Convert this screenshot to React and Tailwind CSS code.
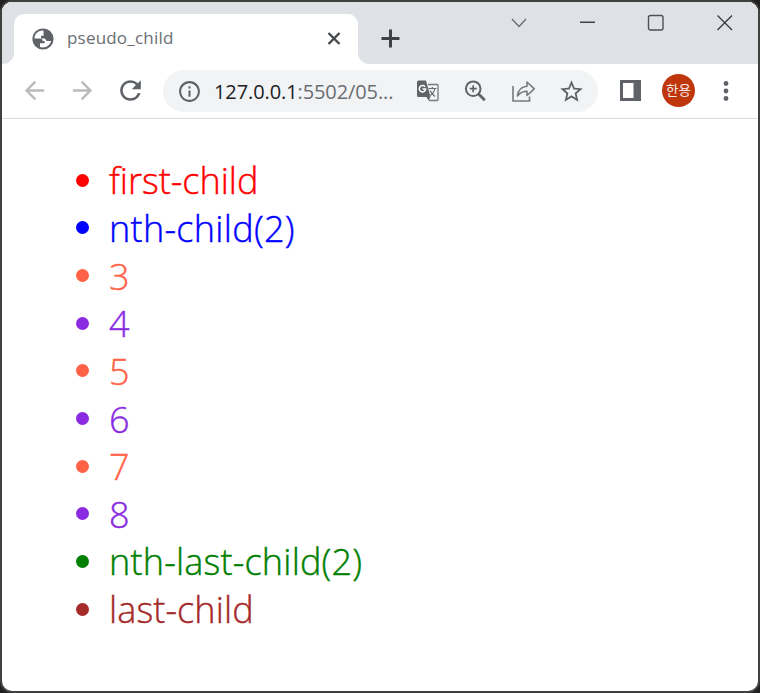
import React from "react";
import { MdArrowBack, MdArrowForward, MdRefresh, MdInfoOutline, MdStarBorder } from "react-icons/md";

const items = [
  { label: "first-child", style: "text-[#ff0000]" },
  { label: "nth-child(2)", style: "text-[#0000ff] tracking-[0.3px]" },
  { label: "3", style: "text-[#ff6347]" },
  { label: "4", style: "text-[#8a2be2]" },
  { label: "5", style: "text-[#ff6347]" },
  { label: "6", style: "text-[#8a2be2]" },
  { label: "7", style: "text-[#ff6347]" },
  { label: "8", style: "text-[#8a2be2]" },
  { label: "nth-last-child(2)", style: "text-[#008000] tracking-[0.2px]" },
  { label: "last-child", style: "text-[#a52a2a] tracking-[0.1px]" },
];

function GlobeIcon() {
  return (
    <svg className="shrink-0" width="22" height="22" viewBox="0 0 22 22">
      <circle cx="11" cy="11" r="10.600" fill="#5f6368" />
      <path d="M11.500 2.500C6 2 2.500 6 2.500 10.500h5.500c1.800 0 2.600.9 2.600 2.500h2v2.300H8v3.800c5 1.500 10-1.500 11.200-6.100h-3.700c-2 0-1.500-2.600-3.200-2.600H9V7.800h2.500z" fill="#fff" />
    </svg>
  );
}

function TabStrip() {
  return (
    <header className="flex h-[62px] shrink-0 bg-[#dee1e6]">
      <div className="flex w-3 shrink-0 items-end bg-white">
        <div className="h-full w-full rounded-br-[11px] bg-[#dee1e6]" />
      </div>
      <div className="w-[344px] shrink-0 bg-[#dee1e6] pt-3">
        <div className="flex h-[50px] items-center rounded-t-[10px] bg-white pl-[18px] pr-[10px]">
          <GlobeIcon />
          <span className="-mt-[2px] ml-[13px] flex-1 text-[17px] leading-[48px] tracking-[0.2px] text-[#6a6e73]">pseudo_child</span>
          <svg width="28" height="28" viewBox="0 0 28 28" fill="none" stroke="#45494d" strokeWidth="2.4">
            <path d="M8.5 8l11 11M19.5 8l-11 11" />
          </svg>
        </div>
      </div>
      <div className="flex flex-1 bg-white">
        <div className="flex flex-1 justify-between rounded-bl-[11px] bg-[#dee1e6] pl-[22px] pr-[24px]">
          <svg className="mt-[26px]" width="20" height="20" viewBox="0 0 20 20" fill="none" stroke="#3f4347" strokeWidth="3">
            <path d="M1.500 10.500h18M10.500 1.500v18" />
          </svg>
          <div className="flex">
            <svg className="mt-[10px] mr-[50px]" width="18" height="20" viewBox="0 0 18 20" fill="none" stroke="#66696d" strokeWidth="1.300">
              <path d="M2 7l7 7.500L16 7" />
            </svg>
            <svg className="mt-[10px] mr-[51px]" width="18" height="20" viewBox="0 0 18 20" fill="none" stroke="#414345" strokeWidth="1.400">
              <path d="M2 10.300h15" />
            </svg>
            <svg className="mt-[10px] mr-[51px]" width="18" height="20" viewBox="0 0 18 20" fill="none" stroke="#4e5053" strokeWidth="1.400">
              <rect x="1.500" y="3.500" width="14.500" height="14.500" rx="2" />
            </svg>
            <svg className="mt-[10px]" width="18" height="20" viewBox="0 0 18 20" fill="none" stroke="#36383a" strokeWidth="1.300">
              <path d="M1.500 3.500l14.500 14.500M16 3.500L1.500 18" />
            </svg>
          </div>
        </div>
      </div>
    </header>
  );
}

function TranslateIcon() {
  return (
    <svg className="shrink-0" width="24" height="24" viewBox="0 0 24 24">
      <path d="M12 5.500h9a1 1 0 0 1 1 1v14a1 1 0 0 1-1 1h-8" fill="none" stroke="#777a7d" strokeWidth="1.300" />
      <path d="M2.500 1.500h7.500l4.500 16.500H2.500a1.500 1.500 0 0 1-1.500-1.500V3a1.500 1.500 0 0 1 1.500-1.500z" fill="#606367" />
      <path d="M10.500 18h4l-2 3.500z" fill="#606367" />
      <path d="M9 7.800A3.200 3.200 0 1 0 9.700 10H6.500" fill="none" stroke="#fff" strokeWidth="1.500" />
      <path d="M12.500 9.500h8M16.300 8v1.500M19 9.500c-.6 3-2.500 5.500-4.500 7M14 11.500c1.200 2.500 3 4.500 5 6" fill="none" stroke="#686b6e" strokeWidth="1.200" />
    </svg>
  );
}

function Toolbar() {
  return (
    <div className="flex h-[55px] shrink-0 items-center border-b border-[#dadce0] bg-white pl-[18px] text-[#5f6368]">
      <MdArrowBack size={29} color="#b9bbbd" className="-mt-[2px] shrink-0" />
      <MdArrowForward size={29} color="#b9bbbd" className="-mt-[2px] ml-[19px] shrink-0" />
      <MdRefresh size={31} className="-mt-[2px] ml-[18px] shrink-0" />
      <div className="ml-[17px] flex h-[42px] w-[435px] shrink-0 items-center rounded-full bg-[#f1f3f4] pl-[14px]">
        <MdInfoOutline size={25} className="shrink-0" />
        <span className="ml-[12px] mt-px w-[202px] text-[20px] leading-[42px] tracking-[-0.1px] text-[#6a6d71]">
          <span className="text-[#202124]">127.0.0.1</span>:5502/05...
        </span>
        <TranslateIcon />
        <svg className="ml-[24px] mr-[2px] shrink-0" width="24" height="24" viewBox="0 0 24 24" fill="none" stroke="#606367">
          <circle cx="9.200" cy="9.700" r="7.300" strokeWidth="2" />
          <path d="M14.300 14.800l6.500 6.500" strokeWidth="2.800" />
          <path d="M5.700 9.700h7M9.200 6.200v7" strokeWidth="1.700" />
        </svg>
        <svg className="ml-[21px] shrink-0" width="26" height="26" viewBox="0 0 26 26" fill="none" stroke="#777a7d" strokeWidth="1.600">
          <path d="M2 8v15h16.500v-4.500" />
          <path d="M6.500 18c.6-6 4-9.300 9.500-9.700V4l7.300 6.800L16 17.500v-4.200c-4.200 0-7 1.500-9.500 4.700z" strokeLinejoin="round" />
        </svg>
        <MdStarBorder size={27} className="ml-[21px] shrink-0" />
      </div>
      <svg className="-mt-px ml-[22px] shrink-0" width="21" height="21" viewBox="0 0 21 21">
        <path d="M0 0h21v21H0zM3 3v15h10.500V3z" fill="#5f6368" fillRule="evenodd" />
      </svg>
      <div className="-mt-[2px] ml-[21px] flex h-[33px] w-[33px] shrink-0 items-center justify-center rounded-full bg-[#bf360c] text-[13.5px] leading-none text-[#f6e8e3] [font-family:'Noto_Sans_CJK_KR',sans-serif]">
        한용
      </div>
      <svg className="-mt-px ml-[28px] shrink-0" width="6" height="22" viewBox="0 0 6 22" fill="#5f6368">
        <circle cx="3" cy="3.500" r="2.400" />
        <circle cx="3" cy="11" r="2.400" />
        <circle cx="3" cy="18.500" r="2.400" />
      </svg>
    </div>
  );
}

export default function App() {
  return (
    <div className="h-[693px] w-[760px] overflow-hidden bg-[#202020] [font-family:'Open_Sans','Noto_Sans',sans-serif]">
      <div className="flex h-full flex-col overflow-hidden rounded-[12px] border-2 border-[#404040] bg-white">
        <TabStrip />
        <Toolbar />
        <main className="flex-1 pl-[74px] pt-[37.5px]">
          <ul>
            {items.map((item) => (
              <li key={item.label} className={`flex h-[47.65px] items-center text-[36px] font-light leading-[47px] [-webkit-text-stroke:0.4px_currentColor] ${item.style}`}>
                <span className="mr-[20px] h-[13px] w-[13px] shrink-0 rounded-full bg-current" />
                <span className="mt-px">{item.label}</span>
              </li>
            ))}
          </ul>
        </main>
      </div>
    </div>
  );
}
